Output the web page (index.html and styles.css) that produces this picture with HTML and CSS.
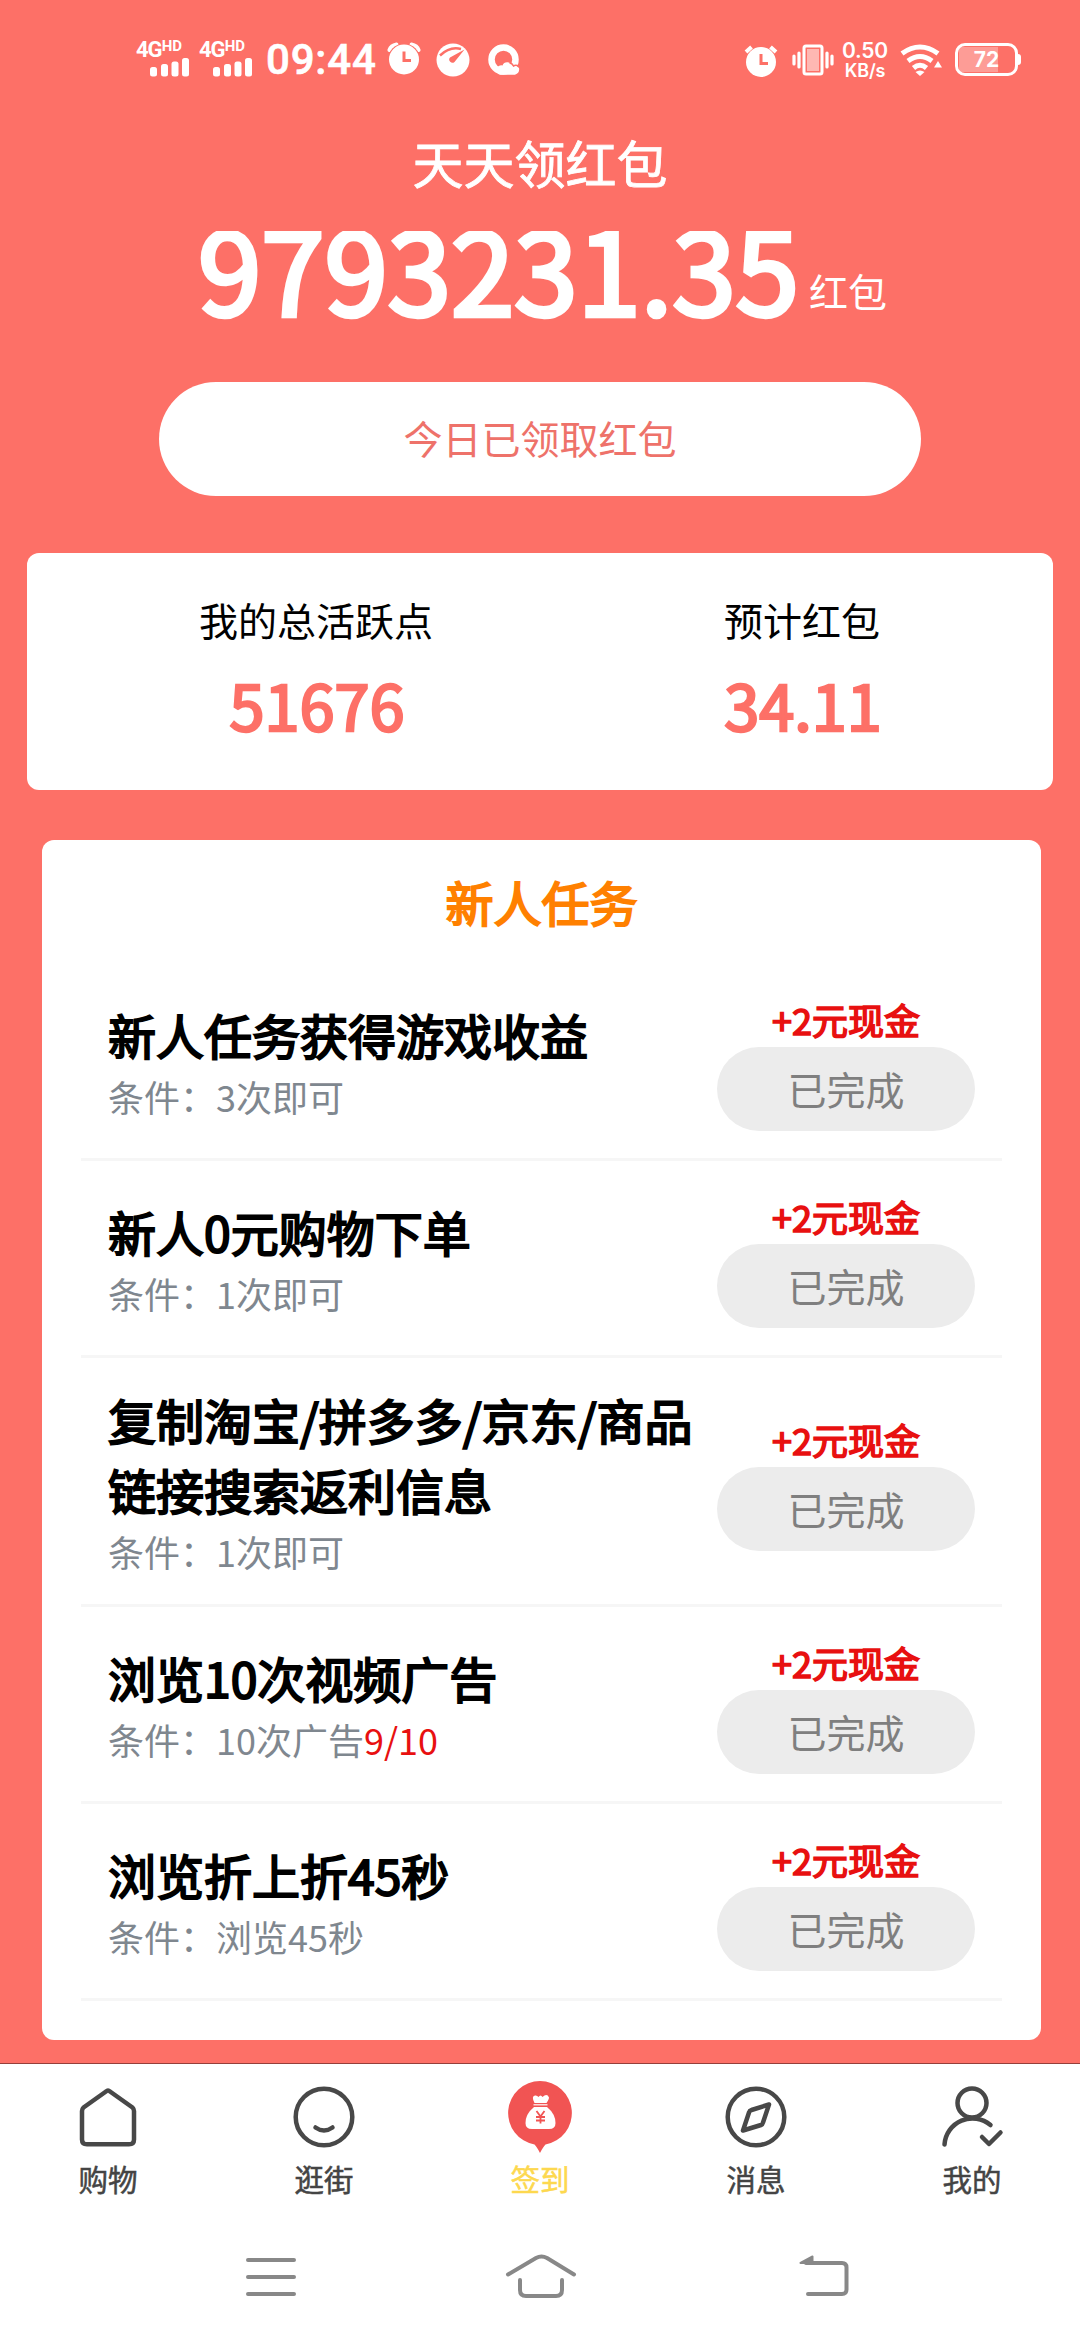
FILE: index.html
```html
<!DOCTYPE html>
<html lang="zh-CN">
<head>
<meta charset="utf-8">
<title>天天领红包</title>
<link rel="stylesheet" href="styles.css">
</head>
<body>
<div class="screen">
  <header class="status">
    <div class="sim"><span class="net">4G<b>HD</b></span><svg class="bars" width="40" height="19" viewBox="0 0 40 19" fill="#fff"><rect x="0" y="9" width="7" height="9.500" rx="2.500"/><rect x="11" y="6" width="7" height="12.500" rx="2.500"/><rect x="21.500" y="3.500" width="7" height="15" rx="2.500"/><rect x="32" y="0" width="7" height="18.500" rx="2.500"/></svg></div>
    <div class="sim"><span class="net">4G<b>HD</b></span><svg class="bars" width="40" height="19" viewBox="0 0 40 19" fill="#fff"><rect x="0" y="9" width="7" height="9.500" rx="2.500"/><rect x="11" y="6" width="7" height="12.500" rx="2.500"/><rect x="21.500" y="3.500" width="7" height="15" rx="2.500"/><rect x="32" y="0" width="7" height="18.500" rx="2.500"/></svg></div>
    <span class="clock">09:44</span>
    <svg class="ic-alarm" width="34" height="34" viewBox="0 0 34 34"><path d="M2.500 8Q4 3.500 9.500 2.500M31.500 8Q30 3.500 24.500 2.500" stroke="#fff" stroke-width="4" fill="none" stroke-linecap="round"/><circle cx="17" cy="17.500" r="16" fill="#fd7067"/><circle cx="17" cy="17.500" r="15" fill="#fff"/><path d="M17 9.500V18.500H24" stroke="#fd7067" stroke-width="3" fill="none"/></svg>
    <svg class="ic-gauge" width="34" height="34" viewBox="0 0 34 34"><circle cx="17" cy="17" r="16.500" fill="#fff"/><path d="M4 12.500Q14 3 25 6" stroke="#fd7067" stroke-width="2.500" fill="none"/><path d="M28.500 6.500L14 14.500A3.200 3.200 0 0 0 18.500 19Z" fill="#fd7067"/></svg>
    <svg class="ic-q" width="32" height="32" viewBox="0 0 32 32"><circle cx="15.500" cy="15.500" r="12" stroke="#fff" stroke-width="6.500" fill="none"/><path d="M12 30.800A4.700 4.700 0 0 1 14.500 21.500A5 5 0 0 1 24 22Q27 20 31 24Q32 29 27 30.800Z" fill="#fff"/><path d="M21.500 19Q24 19 25.500 22Q28 20.500 31 22.500" stroke="#fd7067" stroke-width="1.500" fill="none"/></svg>
    <svg class="ic-alarm2" width="34" height="34" viewBox="0 0 34 34"><circle cx="17" cy="19" r="15" fill="#fff"/><path d="M2 9L7.500 4M32 9L26.500 4" stroke="#fff" stroke-width="4" fill="none"/><path d="M17 11V20.500H24" stroke="#fd7067" stroke-width="3" fill="none"/></svg>
    <svg class="ic-vib" width="42" height="32" viewBox="0 0 42 32"><rect x="12" y="2" width="18" height="28" rx="2" fill="#fd7067" stroke="#fff" stroke-width="3"/><rect x="15" y="5" width="12" height="22" fill="#fff" fill-opacity=".5"/><path d="M2 12V20M7 9V23M35 9V23M40 12V20" stroke="#fff" stroke-width="3.200" stroke-linecap="round"/></svg>
    <div class="speed"><span>0.50</span><span class="unit">KB/s</span></div>
    <svg class="ic-wifi" width="42" height="34" viewBox="0 0 42 34"><g fill="none" stroke="#fff" stroke-width="5"><path d="M2 9.500Q20 -3.500 38 9.500"/><path d="M8 17Q20 8 32 17"/><path d="M13.500 24Q20 18.500 26.500 24"/></g><path d="M15.500 28Q20 25 24.500 28L20 32Z" fill="#fff"/><path d="M38 17L42 23.500H34Z" fill="#fff"/></svg>
    <div class="battery"><span>72</span></div>
  </header>

  <section class="hero">
    <h1>天天领红包</h1>
    <div class="amount"><strong>9793231.35</strong><span>红包</span></div>
    <button class="claim">今日已领取红包</button>
  </section>

  <section class="stats">
    <div class="stat"><span>我的总活跃点</span><strong>51676</strong></div>
    <div class="stat"><span>预计红包</span><strong>34.11</strong></div>
  </section>

  <section class="tasks">
    <h2>新人任务</h2>
    <div class="task"><div class="info"><h3>新人任务获得游戏收益</h3><p>条件：3次即可</p></div><div class="side"><em>+2元现金</em><button>已完成</button></div></div>
    <div class="task"><div class="info"><h3>新人0元购物下单</h3><p>条件：1次即可</p></div><div class="side"><em>+2元现金</em><button>已完成</button></div></div>
    <div class="task"><div class="info"><h3>复制淘宝/拼多多/京东/商品链接搜索返利信息</h3><p>条件：1次即可</p></div><div class="side"><em>+2元现金</em><button>已完成</button></div></div>
    <div class="task"><div class="info"><h3>浏览10次视频广告</h3><p>条件：10次广告<i>9/10</i></p></div><div class="side"><em>+2元现金</em><button>已完成</button></div></div>
    <div class="task"><div class="info"><h3>浏览折上折45秒</h3><p>条件：浏览45秒</p></div><div class="side"><em>+2元现金</em><button>已完成</button></div></div>
  </section>

  <nav class="tabs">
    <a class="tab"><svg width="72" height="80" viewBox="0 0 72 80"><path d="M36 18.500Q37 18.500 38 19.500L60.500 35.500Q62 37 62 39V67.500Q62 72.300 57 72.300H15Q10 72.300 10 67.500V39Q10 37 11.500 35.500L34 19.500Q35 18.500 36 18.500Z" class="line"/></svg><span>购物</span></a>
    <a class="tab"><svg width="72" height="80" viewBox="0 0 72 80"><circle cx="36" cy="45" r="28.300" class="line"/><path d="M27.500 55.500Q36 61.500 44.500 55.500" class="line"/></svg><span>逛街</span></a>
    <a class="tab active"><svg width="72" height="80" viewBox="0 0 72 80"><path d="M36 9A32 32 0 0 1 41.500 72.500Q39 75 36 81Q33 75 30.500 72.500A32 32 0 0 1 36 9Z" fill="#f15453"/><path d="M30.500 31Q27 24 31 23.500Q33 23 34.500 25Q36.500 22 38.500 25Q43 21 45 25.500Q45 27 42.500 31Z" fill="#fff"/><path d="M29.500 32.800H43.500" stroke="#fff" stroke-width="1.200"/><path d="M30 35H43Q51.500 42 51.500 51Q51.500 57 45 57H28Q21.500 57 21.500 51Q21.500 42 30 35Z" fill="#fff"/><path d="M32.500 39L36.500 44.500L40.500 39M36.500 44V51.500M32 45H41M32 48.500H41" stroke="#f15453" stroke-width="1.800" fill="none"/></svg><span>签到</span></a>
    <a class="tab"><svg width="72" height="80" viewBox="0 0 72 80"><circle cx="36" cy="45" r="28.300" class="line"/><path d="M49 32.500L31.500 38Q29.500 38.500 29 40.500L23 58.500L41 53Q42.500 52.500 43 50.500Z" class="line"/></svg><span>消息</span></a>
    <a class="tab"><svg width="72" height="80" viewBox="0 0 72 80"><circle cx="36" cy="31" r="14.500" class="line"/><path d="M8.500 72.500A28 28 0 0 1 54.500 53M46 65L53 72L64.500 60.500" class="line"/></svg><span>我的</span></a>
  </nav>

  <footer class="sysnav">
    <svg width="72" height="60" viewBox="0 0 72 60"><path d="M13 14H59M13 31H59M13 48H59"/></svg>
    <svg width="72" height="60" viewBox="0 0 72 60"><path d="M3 28.500L31 12Q36.500 9 42 12L69 28.500M15 34V44Q15 50 21 50H51Q57 50 57 44V34"/></svg>
    <svg width="72" height="60" viewBox="0 0 72 60"><path d="M16 17H52Q56.500 17 56.500 21.500V43.500Q56.500 48 52 48H18"/><path d="M10.500 17L22.500 10.500V17Z" fill="#888" stroke-width="2"/></svg>
  </footer>
</div>
</body>
</html>
```

FILE: styles.css
```css
* { box-sizing: border-box; margin: 0; padding: 0; }
body {
  width: 1080px;
  height: 2340px;
  overflow: hidden;
  background: #fd7067;
  font-family: "Noto Sans CJK SC", sans-serif;
}
.screen { display: flex; flex-direction: column; height: 2340px; }
button { border: 0; font-family: inherit; }
h1, h2, h3, strong, em, i { font-weight: 400; font-style: normal; }

/* status bar */
.status {
  display: flex;
  align-items: flex-start;
  height: 117px;
  padding-left: 136px;
  color: #fff;
  font-family: Inter, "Noto Sans", sans-serif;
}
.sim { display: flex; flex-direction: column; width: 63px; padding-top: 41px; }
.net { display: flex; height: 17px; font-family: Roboto, sans-serif; font-size: 22px; line-height: 18px; font-weight: 700; letter-spacing: -1px; }
.net b { font-size: 15px; line-height: 11px; letter-spacing: 0; font-weight: 700; }
.bars { margin-left: 14px; }
.clock { width: 114px; margin: 36px 7px 0 4px; font-family: Roboto, sans-serif; font-size: 42px; line-height: 48px; font-weight: 500; letter-spacing: .8px; white-space: nowrap; -webkit-text-stroke: .6px #fff; }
.ic-alarm { margin-top: 42px; }
.ic-gauge { margin: 43px 0 0 15px; }
.ic-q { margin: 44px 0 0 18px; }
.ic-alarm2 { margin: 43px 0 0 224px; }
.ic-vib { margin: 44px 0 0 14px; }
.speed { display: flex; flex-direction: column; align-items: center; width: 48px; margin: 41px 0 0 7px; font-size: 21px; line-height: 20px; font-weight: 600; letter-spacing: -.2px; }
.speed .unit { font-size: 18px; }
.ic-wifi { margin: 44px 0 0 11px; }
.battery {
  position: relative;
  width: 63px;
  height: 33px;
  margin: 43px 0 0 13px;
  padding: 1px;
  border: 3px solid #fff;
  border-radius: 10px;
  background: linear-gradient(#fd9c96, #fd9c96) 1px 1px / 39px 25px no-repeat;
  font-size: 21px;
  line-height: 25px;
  font-weight: 700;
  text-align: center;
}
.battery::after {
  content: "";
  position: absolute;
  right: -6px;
  top: 8px;
  width: 3px;
  height: 11px;
  border-radius: 0 3px 3px 0;
  background: #fff;
}

/* hero */
.hero { display: flex; flex-direction: column; align-items: center; height: 436px; color: #fff; }
.hero h1 { height: 84px; font-size: 51px; line-height: 90px; -webkit-text-stroke: .8px #fff; }
.amount { display: flex; justify-content: center; align-items: flex-start; height: 181px; padding-left: 5px; }
.amount strong { height: 132px; font-size: 114px; line-height: 132px; -webkit-text-stroke: 4.500px #fff; clip-path: inset(30px -10px 13px -10px); }
.amount span { margin: 59px 0 0 10px; font-size: 39px; line-height: 60px; }
.claim { width: 762px; height: 114px; padding-bottom: 4px; border-radius: 57px; background: #fff; color: #ee726a; font-size: 39px; }

/* totals */
.stats {
  display: grid;
  grid-template-columns: 486px 486px;
  width: 1026px;
  height: 237px;
  margin-left: 27px;
  padding: 33px 0 0 46px;
  border-radius: 12px;
  background: #fff;
}
.stat { display: flex; flex-direction: column; align-items: center; }
.stat span { height: 66px; font-size: 39px; line-height: 66px; color: #000; }
.stat strong { padding-left: 2px; font-size: 63px; line-height: 104px; color: #fd7067; -webkit-text-stroke: 2.6px #fd7067; }

/* task list */
.tasks {
  width: 999px;
  height: 1200px;
  margin: 50px 0 0 42px;
  padding: 0 39px;
  border-radius: 12px;
  background: #fff;
}
.tasks h2 { height: 124px; font-size: 48px; line-height: 123px; text-align: center; color: #ff8000; -webkit-text-stroke: 2px #ff8000; }
.task {
  display: flex;
  justify-content: space-between;
  align-items: center;
  min-height: 197px;
  padding: 27px;
  border-bottom: 3px solid #f6f6f6;
}
.task:nth-of-type(3) { min-height: 249px; }
.info { width: 600px; margin-top: -11px; }
.info h3 { margin-bottom: 6px; font-size: 48px; line-height: 70px; color: #000; -webkit-text-stroke: 2px #000; }
.info p { margin-bottom: -4px; font-size: 36px; line-height: 42px; color: #7f878f; }
.info i { color: #e81010; }
.side { display: flex; flex-direction: column; align-items: center; width: 258px; }
.side em { height: 56px; font-size: 36px; line-height: 56px; color: #e81010; -webkit-text-stroke: 1.6px #e81010; }
.side button { width: 258px; height: 84px; padding-bottom: 3px; border-radius: 42px; background: #ececec; color: #7f7f7f; font-size: 39px; }

/* tab bar */
.tabs {
  display: grid;
  grid-template-columns: repeat(5, 1fr);
  height: 152px;
  margin-top: 23px;
  border-top: 1px solid #953f3b;
  background: #fff;
}
.tab { display: flex; flex-direction: column; align-items: center; color: #444; font-size: 29.500px; }
.tab svg { margin-top: 8px; overflow: visible; }
.tab span { height: 44px; line-height: 44px; margin-top: 4px; -webkit-text-stroke: .5px currentColor; }
.tab.active { color: #fdd84f; }
.line { fill: none; stroke: #484848; stroke-width: 4.500; stroke-linecap: round; stroke-linejoin: round; }

/* system navigation */
.sysnav { display: flex; flex: 1; align-items: flex-start; gap: 0; padding: 31px 0 0 235px; background: #fff; }
.sysnav svg { fill: none; stroke: #888; stroke-width: 4; stroke-linecap: round; stroke-linejoin: round; }
.sysnav svg + svg { margin-left: 198px; }
.sysnav svg:last-child { margin-left: 213px; }
```
